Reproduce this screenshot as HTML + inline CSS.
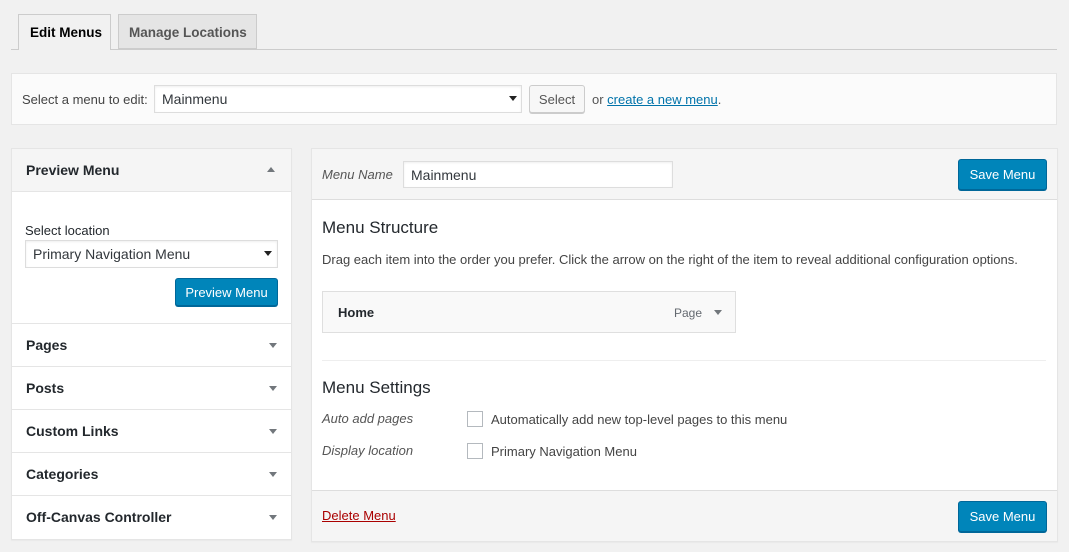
<!DOCTYPE html>
<html><head><style>
*{box-sizing:border-box;margin:0;padding:0}
body{width:1069px;height:552px;background:#f1f1f1;font-family:"Liberation Sans",sans-serif;font-size:13px;color:#444;position:relative;overflow:hidden}
.a{position:absolute}
.t{white-space:nowrap}
.btnp{position:absolute;background:#0085ba;border:1px solid #006799;border-radius:3px;color:#fff;font-size:13px;text-align:center;box-shadow:0 1px 0 #006799}
.inp{position:absolute;background:#fff;border:1px solid #ddd;box-shadow:inset 0 1px 2px rgba(0,0,0,.07);font-size:14px;color:#32373c;padding-left:7px}
.arr{position:absolute;width:0;height:0;border-left:4px solid transparent;border-right:4px solid transparent;border-top:5px solid #555}
.sec{position:absolute;left:11px;width:281px;height:43px;border-top:1px solid #e5e5e5;font-weight:bold;color:#23282d;font-size:14px;padding:13px 0 0 15px}
.sec .arr{right:15px;top:19px;border-top-color:#72777c}
.cb{position:absolute;width:16px;height:16px;border:1px solid #b4b9be;background:#fff}
</style></head><body>
<div class="a" style="left:11px;top:49px;width:1046px;height:1px;background:#ccc"></div>
<div class="a t" style="left:18px;top:14px;width:93px;height:36px;background:#f1f1f1;border:1px solid #ccc;border-bottom:none;font-weight:bold;font-size:13.5px;color:#000;padding:10px 0 0 11px">Edit Menus</div>
<div class="a t" style="left:118px;top:14px;width:139px;height:35px;background:#e5e5e5;border:1px solid #ccc;font-weight:bold;font-size:13.5px;color:#555;padding:10px 0 0 10px">Manage Locations</div>
<div class="a" style="left:11px;top:73px;width:1046px;height:52px;background:#fbfbfb;border:1px solid #e5e5e5"></div>
<div class="a t" style="left:22px;top:92px;font-size:13px">Select a menu to edit:</div>
<div class="inp" style="left:154px;top:85px;width:368px;height:28px;padding-top:5px">Mainmenu</div>
<div class="arr" style="left:509px;top:96px;border-top-color:#222"></div>
<div class="a t" style="left:529px;top:85px;width:56px;height:28px;background:#f7f7f7;border:1px solid #ccc;border-radius:3px;box-shadow:0 1px 0 #ccc;text-align:center;padding-top:6px;color:#555">Select</div>
<div class="a t" style="left:592px;top:92px;color:#555">or <span style="color:#0073aa;text-decoration:underline">create a new menu</span>.</div>
<div class="a" style="left:11px;top:148px;width:281px;height:392px;background:#fff;border:1px solid #e5e5e5;box-shadow:0 1px 1px rgba(0,0,0,.04)"></div>
<div class="a" style="left:12px;top:149px;width:279px;height:43px;background:#f5f5f5;border-bottom:1px solid #e5e5e5"></div>
<div class="a t" style="left:26px;top:162px;font-weight:bold;font-size:14px;color:#23282d">Preview Menu</div>
<div class="a" style="left:267px;top:167px;width:0;height:0;border-left:4px solid transparent;border-right:4px solid transparent;border-bottom:5px solid #72777c"></div>
<div class="a t" style="left:25px;top:223px;color:#23282d">Select location</div>
<div class="inp" style="left:25px;top:240px;width:253px;height:28px;padding-top:5px">Primary Navigation Menu</div>
<div class="arr" style="left:264px;top:251px;border-top-color:#222"></div>
<div class="btnp t" style="left:175px;top:278px;width:103px;height:28px;padding-top:6px">Preview Menu</div>
<div class="sec" style="top:323px">Pages<div class="arr"></div></div>
<div class="sec" style="top:366px">Posts<div class="arr"></div></div>
<div class="sec" style="top:409px">Custom Links<div class="arr"></div></div>
<div class="sec" style="top:452px">Categories<div class="arr"></div></div>
<div class="sec" style="top:495px">Off-Canvas Controller<div class="arr"></div></div>
<div class="a" style="left:311px;top:148px;width:747px;height:394px;background:#fff;border:1px solid #e5e5e5;box-shadow:0 1px 1px rgba(0,0,0,.04)"></div>
<div class="a" style="left:312px;top:149px;width:745px;height:51px;background:#f5f5f5;border-bottom:1px solid #ddd"></div>
<div class="a t" style="left:322px;top:167px;font-style:italic;color:#555">Menu Name</div>
<div class="inp" style="left:403px;top:161px;width:270px;height:27px;padding-top:5px">Mainmenu</div>
<div class="btnp t" style="left:958px;top:159px;width:89px;height:31px;padding-top:7px">Save Menu</div>
<div class="a t" style="left:322px;top:218px;font-size:17px;color:#23282d">Menu Structure</div>
<div class="a t" style="left:322px;top:252px;color:#444">Drag each item into the order you prefer. Click the arrow on the right of the item to reveal additional configuration options.</div>
<div class="a" style="left:322px;top:291px;width:414px;height:42px;background:#f9f9f9;border:1px solid #dfdfdf"></div>
<div class="a t" style="left:338px;top:305px;font-weight:bold;color:#23282d">Home</div>
<div class="a t" style="left:674px;top:306px;font-size:12px;color:#646970">Page</div>
<div class="arr" style="left:714px;top:310px;border-top-color:#72777c"></div>
<div class="a" style="left:322px;top:360px;width:724px;height:1px;background:#eee"></div>
<div class="a t" style="left:322px;top:378px;font-size:17px;color:#23282d">Menu Settings</div>
<div class="a t" style="left:322px;top:411px;font-style:italic;color:#555">Auto add pages</div>
<div class="cb" style="left:467px;top:411px"></div>
<div class="a t" style="left:491px;top:412px;color:#444">Automatically add new top-level pages to this menu</div>
<div class="a t" style="left:322px;top:443px;font-style:italic;color:#555">Display location</div>
<div class="cb" style="left:467px;top:443px"></div>
<div class="a t" style="left:491px;top:444px;color:#444">Primary Navigation Menu</div>
<div class="a" style="left:312px;top:490px;width:745px;height:51px;background:#f5f5f5;border-top:1px solid #ddd"></div>
<div class="a t" style="left:322px;top:508px;color:#a00;text-decoration:underline">Delete Menu</div>
<div class="btnp t" style="left:958px;top:501px;width:89px;height:31px;padding-top:7px">Save Menu</div>
</body></html>
